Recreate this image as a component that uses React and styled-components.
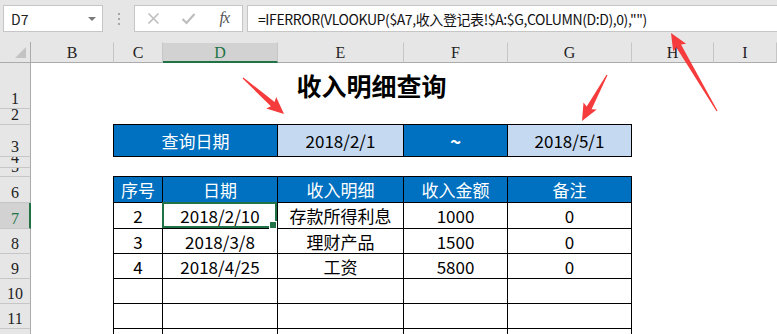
import React from 'react';
import styled, { createGlobalStyle } from 'styled-components';

const GlobalStyle = createGlobalStyle`
  html, body { margin: 0; padding: 0; background: #fff; }
  body { font-family: "Noto Sans CJK SC", "Noto Sans", sans-serif; overflow: hidden; }
  * { box-sizing: border-box; }
`;

const Page = styled.div`
  position: relative;
  width: 777px;
  height: 334px;
  overflow: hidden;
  background: #fff;
`;

/* ---------- formula bar ---------- */
const FormulaBar = styled.div`
  display: flex;
  align-items: flex-start;
  height: 42px;
  padding: 5px 0 0 3px;
  background: #e6e6e6;
`;

const Field = styled.div`
  height: 27px;
  border: 1px solid #c6c6c6;
  background: #fff;
  display: flex;
  align-items: center;
`;

const NameBox = styled(Field)`
  width: 100px;
  justify-content: space-between;
  padding: 0 6px 0 7px;
  font-size: 14px;
  color: #222;
`;

const DropTri = styled.span`
  width: 0;
  height: 0;
  border-left: 4px solid transparent;
  border-right: 4px solid transparent;
  border-top: 4px solid #7a7a7a;
  margin-top: 1px;
`;

const Grip = styled.div`
  width: 31px;
  height: 27px;
  display: flex;
  flex-direction: column;
  align-items: center;
  justify-content: center;
  gap: 3px;
`;

const GripDot = styled.span`
  width: 2px;
  height: 2px;
  background: #a6a6a6;
`;

const IconBox = styled(Field)`
  width: 109px;
  padding-left: 1px;
`;

const IconSlot = styled.div`
  width: 36px;
  height: 100%;
  display: flex;
  align-items: center;
  justify-content: center;
`;

const Fx = styled.span`
  font-family: "Liberation Serif", "DejaVu Serif", serif;
  font-style: italic;
  font-size: 16px;
  color: #555;
  letter-spacing: -1px;
  margin-top: -2px;
`;

const FormulaInput = styled(Field)`
  flex: 1;
  margin-left: 4px;
  padding-left: 10px;
  border-right: none;
  font-size: 14px;
  letter-spacing: -0.4px;
  color: #111;
  white-space: nowrap;
`;

/* ---------- sheet ---------- */
const Sheet = styled.div`
  display: grid;
  grid-template-columns: 31px 83px 49px 115px 126px 104px 124px 82px 1fr;
  grid-template-rows: 21px 46px 16px 32px 11px 9px 26px 26px 25px 25px 25px 25px 25px;
`;

const Corner = styled.div`
  grid-row: 1;
  grid-column: 1;
  background: #e6e6e6;
  border-right: 1px solid #ababab;
  border-bottom: 1px solid #ababab;
  display: flex;
  align-items: flex-end;
  justify-content: flex-end;
  padding: 0 4px 4px 0;
`;

const CornerTri = styled.span`
  width: 0;
  height: 0;
  border-left: 11px solid transparent;
  border-bottom: 11px solid #c3c3c3;
`;

const ColHeader = styled.div`
  grid-row: 1;
  grid-column: ${(p) => p.$col};
  background: ${(p) => (p.$active ? '#d2d2d2' : '#e6e6e6')};
  border-right: 1px solid #c6c6c6;
  border-bottom: ${(p) => (p.$active ? '2px solid #217346' : '1px solid #ababab')};
  border-top: 1px solid #e6e6e6;
  color: ${(p) => (p.$active ? '#217346' : '#222')};
  font-family: "Liberation Serif", "DejaVu Serif", serif;
  font-size: 16px;
  line-height: 1;
  display: flex;
  align-items: flex-end;
  justify-content: center;
  padding-bottom: ${(p) => (p.$active ? '0' : '1px')};
`;

const RowHeader = styled.div`
  grid-column: 1;
  grid-row: ${(p) => p.$row};
  background: ${(p) => (p.$active ? '#d2d2d2' : '#e6e6e6')};
  border-right: ${(p) => (p.$active ? '2px solid #217346' : '1px solid #ababab')};
  border-bottom: 1px solid #c6c6c6;
  color: ${(p) => (p.$active ? '#217346' : '#222')};
  font-family: "Liberation Serif", "DejaVu Serif", serif;
  font-size: 16px;
  line-height: 1;
  display: flex;
  align-items: flex-end;
  justify-content: center;
  padding-bottom: 1px;
  padding-left: ${(p) => (p.$active ? '1px' : '0')};
  overflow: hidden;
`;

const Title = styled.div`
  grid-row: 2;
  grid-column: 2 / span 7;
  display: flex;
  align-items: center;
  justify-content: center;
  font-size: 25px;
  font-weight: 700;
  color: #000;
  padding: 0 2px 2px 0;
`;

const tones = {
  dark: { bg: '#0070c0', fg: '#fff' },
  light: { bg: '#c5d9f1', fg: '#000' },
  plain: { bg: 'transparent', fg: '#000' },
};

const edgeShadow = (top, left) => {
  const s = [];
  if (top) s.push('0 -1px 0 #000');
  if (left) s.push('-1px 0 0 #000');
  if (top && left) s.push('-1px -1px 0 #000');
  return s.length ? s.join(', ') : 'none';
};

const Cell = styled.div`
  position: relative;
  grid-row: ${(p) => p.$row};
  grid-column: ${(p) => p.$col} / span ${(p) => p.$span || 1};
  background: ${(p) => tones[p.$tone || 'plain'].bg};
  color: ${(p) => tones[p.$tone || 'plain'].fg};
  border-right: 1px solid #000;
  border-bottom: 1px solid #000;
  box-shadow: ${(p) => edgeShadow(p.$top, p.$left)};
  display: flex;
  align-items: center;
  justify-content: center;
  font-size: 17px;
  line-height: 1;
  white-space: nowrap;
`;

const Tilde = styled.span`
  font-size: 19px;
  font-weight: 700;
`;

const Selection = styled.div`
  position: absolute;
  top: -1px;
  left: -1px;
  right: 0;
  bottom: 0;
  border: 2px solid #217346;
  pointer-events: none;
`;

const FillHandle = styled.span`
  position: absolute;
  right: -1px;
  bottom: -2px;
  width: 6px;
  height: 6px;
  background: #217346;
  box-shadow: 0 0 0 1px #fff;
`;

const Overlay = styled.svg`
  position: absolute;
  left: 0;
  top: 0;
  pointer-events: none;
`;

/* ---------- data ---------- */
const cols = ['B', 'C', 'D', 'E', 'F', 'G', 'H', 'I'];
const rowNums = [1, 2, 3, 4, 5, 6, 7, 8, 9, 10, 11, 12];
const headers = ['序号', '日期', '收入明细', '收入金额', '备注'];
const rows = [
  ['2', '2018/2/10', '存款所得利息', '1000', '0'],
  ['3', '2018/3/8', '理财产品', '1500', '0'],
  ['4', '2018/4/25', '工资', '5800', '0'],
  ['', '', '', '', ''],
  ['', '', '', '', ''],
  ['', '', '', '', ''],
];

function arrowPoints(x1, y1, x2, y2, headLen = 15, headHalf = 7.5, shaftHalf = 2.8, tailHalf = 0.6) {
  const dx = x2 - x1;
  const dy = y2 - y1;
  const len = Math.hypot(dx, dy);
  const ux = dx / len;
  const uy = dy / len;
  const nx = -uy;
  const ny = ux;
  const bx = x2 - ux * headLen;
  const by = y2 - uy * headLen;
  const bbx = bx - ux * 2;
  const bby = by - uy * 2;
  const pts = [
    [x1 + nx * tailHalf, y1 + ny * tailHalf],
    [bx + nx * shaftHalf, by + ny * shaftHalf],
    [bbx + nx * headHalf, bby + ny * headHalf],
    [x2, y2],
    [bbx - nx * headHalf, bby - ny * headHalf],
    [bx - nx * shaftHalf, by - ny * shaftHalf],
    [x1 - nx * tailHalf, y1 - ny * tailHalf],
  ];
  return pts.map((p) => p.map((v) => v.toFixed(1)).join(',')).join(' ');
}

const arrows = [
  [243, 78, 284, 114],
  [607, 75, 582, 121],
  [717, 111, 671, 33],
];

export default function App() {
  return (
    <Page>
      <GlobalStyle />
      <FormulaBar>
        <NameBox>
          <span>D7</span>
          <DropTri />
        </NameBox>
        <Grip>
          <GripDot />
          <GripDot />
          <GripDot />
        </Grip>
        <IconBox>
          <IconSlot>
            <svg width="13" height="13" viewBox="0 0 13 13">
              <path d="M1.5 1.5 L11.5 11.5 M11.5 1.5 L1.5 11.5" stroke="#bdbdbd" strokeWidth="1.6" fill="none" />
            </svg>
          </IconSlot>
          <IconSlot>
            <svg width="15" height="13" viewBox="0 0 15 13">
              <path d="M1.5 7 L5.5 11 L13.5 2" stroke="#bdbdbd" strokeWidth="2.2" fill="none" />
            </svg>
          </IconSlot>
          <IconSlot>
            <Fx>fx</Fx>
          </IconSlot>
        </IconBox>
        <FormulaInput>{'=IFERROR(VLOOKUP($A7,收入登记表!$A:$G,COLUMN(D:D),0),"")'}</FormulaInput>
      </FormulaBar>

      <Sheet>
        <Corner>
          <CornerTri />
        </Corner>
        {cols.map((c, i) => (
          <ColHeader key={c} $col={i + 2} $active={c === 'D'}>
            {c}
          </ColHeader>
        ))}
        {rowNums.map((n) => (
          <RowHeader key={n} $row={n + 1} $active={n === 7}>
            {n}
          </RowHeader>
        ))}

        <Title>收入明细查询</Title>

        <Cell $row={4} $col={3} $span={2} $tone="dark" $top $left>查询日期</Cell>
        <Cell $row={4} $col={5} $tone="light" $top>2018/2/1</Cell>
        <Cell $row={4} $col={6} $tone="dark" $top>
          <Tilde>~</Tilde>
        </Cell>
        <Cell $row={4} $col={7} $tone="light" $top>2018/5/1</Cell>

        {headers.map((h, i) => (
          <Cell key={h} $row={7} $col={i + 3} $tone="dark" $top $left={i === 0}>
            {h}
          </Cell>
        ))}

        {rows.map((r, ri) =>
          r.map((v, ci) => (
            <Cell key={`${ri}-${ci}`} $row={ri + 8} $col={ci + 3} $left={ci === 0}>
              {v}
              {ri === 0 && ci === 1 && (
                <Selection>
                  <FillHandle />
                </Selection>
              )}
            </Cell>
          ))
        )}
      </Sheet>

      <Overlay width="777" height="334" viewBox="0 0 777 334">
        {arrows.map((a, i) => (
          <polygon key={i} points={arrowPoints(...a)} fill="#f53b3b" />
        ))}
      </Overlay>
    </Page>
  );
}
